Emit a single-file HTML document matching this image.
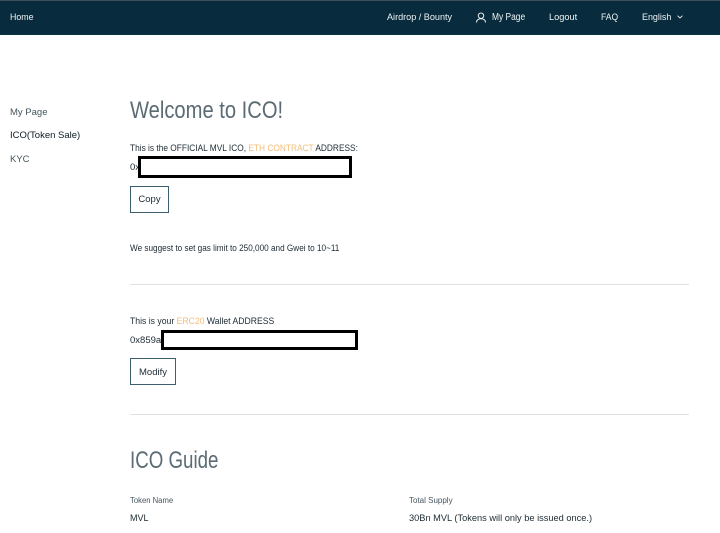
<!DOCTYPE html>
<html><head><meta charset="utf-8"><style>
html,body{margin:0;padding:0;background:#fff;width:720px;height:533px;overflow:hidden}
body{position:relative;font-family:"Liberation Sans","Noto Sans CJK KR",sans-serif;color:#1c2b33}
.t{position:absolute;white-space:nowrap;font-size:9.5px;line-height:14px;transform-origin:left center}
.nav{position:absolute;left:0;top:0;width:720px;height:35px;background:#082c3d;border-top:1px solid #3c4f59;box-sizing:border-box;border-bottom:1px solid #0a3344}
.w{color:#eef3f5}
.h{font-size:24px;line-height:28px;color:#5b6b74}
.o{color:#f3bd78}
.box{position:absolute;box-sizing:border-box;border:3px solid #000;background:#fff}
.btn{position:absolute;box-sizing:border-box;border:1px solid #3c5f70;background:#fff;text-align:center;font-size:9.5px;color:#1c2b33;height:27px;line-height:25px}
.hr{position:absolute;left:130px;width:559px;height:1px;background:#dfe1e2}
</style></head><body>
<div class="nav"></div>
<div class="t w" style="left:10px;top:11px;transform:scaleX(.93)">Home</div>
<div class="t w" style="left:387px;top:11px;transform:scaleX(.955)">Airdrop / Bounty</div>
<svg style="position:absolute;left:475px;top:12px" width="12" height="12" viewBox="0 0 12 12" fill="none" stroke="#e8eef0" stroke-width="1"><circle cx="6" cy="3.700" r="2.700"/><path d="M1.500 10.500c0-2.500 2-3.800 4.500-3.800s4.500 1.300 4.500 3.800"/></svg>
<div class="t w" style="left:492px;top:11px;font-size:10px;transform:scaleX(.84)">My Page</div>
<div class="t w" style="left:549px;top:11px;transform:scaleX(.97)">Logout</div>
<div class="t w" style="left:601px;top:11px;transform:scaleX(.9)">FAQ</div>
<div class="t w" style="left:642px;top:11px;transform:scaleX(.94)">English</div>
<svg style="position:absolute;left:677px;top:15px" width="6" height="4" viewBox="0 0 6 4" fill="none" stroke="#e8eef0" stroke-width="0.9"><path d="M.5.700 3 3 5.500.700"/></svg>

<div class="t" style="left:10px;top:106px;color:#44565f">My Page</div>
<div class="t" style="left:10px;top:129px;color:#0d1c24">ICO(Token Sale)</div>
<div class="t" style="left:10px;top:153px;color:#44565f">KYC</div>

<div class="t h" style="left:130px;top:97px;transform:scaleX(.84)">Welcome to ICO!</div>
<div class="t" style="left:130px;top:142px;transform:scaleX(.877)">This is the OFFICIAL MVL ICO, <span class="o">ETH CONTRACT</span> ADDRESS:</div>
<div class="t" style="left:130px;top:161px">0x</div>
<div class="box" style="left:138px;top:156px;width:214px;height:22px"></div>
<div class="btn" style="left:130px;top:186px;width:39px">Copy</div>
<div class="t" style="left:130px;top:241px;font-size:9px;transform:scaleX(.91)">We suggest to set gas limit to 250,000 and Gwei to 10~11</div>
<div class="hr" style="top:284px"></div>

<div class="t" style="left:130px;top:315px;transform:scaleX(.91)">This is your <span class="o">ERC20</span> Wallet ADDRESS</div>
<div class="t" style="left:130px;top:334px">0x859a</div>
<div class="box" style="left:161px;top:330px;width:197px;height:20px"></div>
<div class="btn" style="left:130px;top:358px;width:46px;line-height:27px">Modify</div>
<div class="hr" style="top:414px"></div>

<div class="t h" style="left:130px;top:447px;transform:scaleX(.78)">ICO Guide</div>
<div class="t" style="left:130px;top:494px;font-size:8px;color:#44565f;transform:scaleX(.96)">Token Name</div>
<div class="t" style="left:130px;top:512px;transform:scaleX(.95)">MVL</div>
<div class="t" style="left:409px;top:494px;font-size:8px;color:#44565f">Total Supply</div>
<div class="t" style="left:409px;top:512px;transform:scaleX(.973)">30Bn MVL (Tokens will only be issued once.)</div>
</body></html>
